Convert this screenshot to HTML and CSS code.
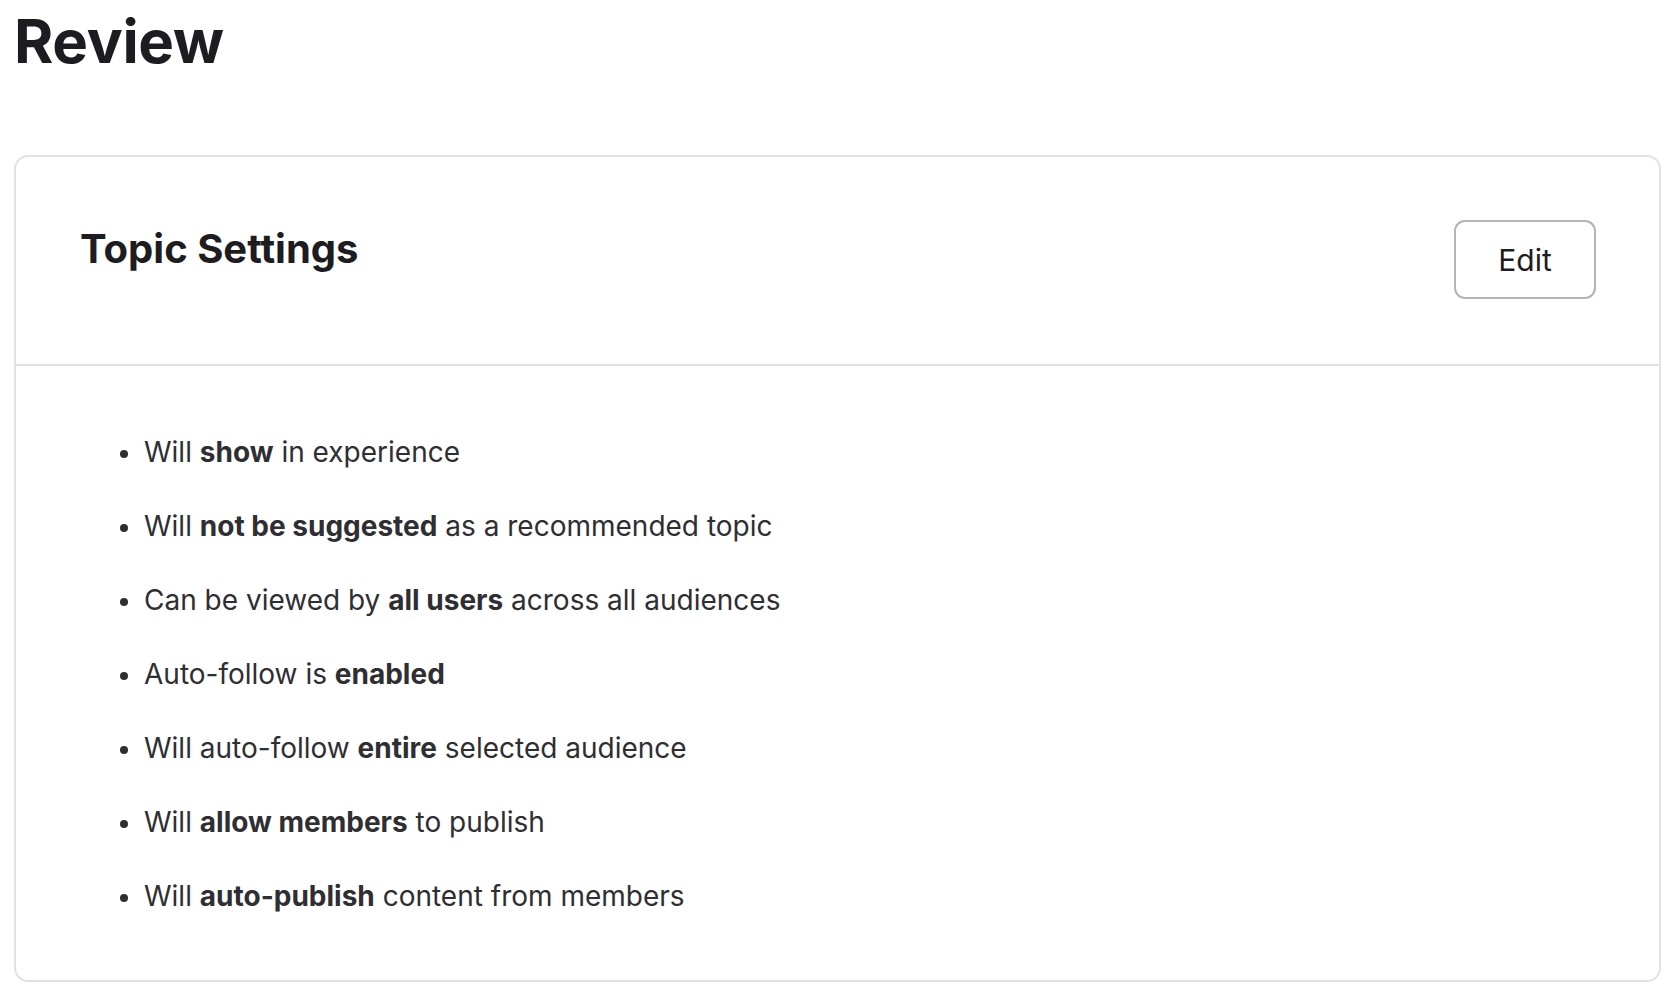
FILE: index.html
```html
<!DOCTYPE html>
<html lang="en">

<head>
    <meta charset="UTF-8">
    <meta name="viewport" content="width=device-width, initial-scale=1.0">
    <title>Review</title>
    <link rel="stylesheet" href="styles.css">
</head>

<body>
    <h1 class="page-title">Review</h1>

    <div class="card">
        <div class="card-header">
            <h2 class="card-title">Topic Settings</h2>
            <button class="edit-button">Edit</button>
        </div>
        <ul class="settings-list">
            <li>Will <strong>show</strong> in experience</li>
            <li>Will <strong>not be suggested</strong> as a recommended topic</li>
            <li>Can be viewed by <strong>all users</strong> across all audiences</li>
            <li>Auto-follow is <strong>enabled</strong></li>
            <li>Will auto-follow <strong>entire</strong> selected audience</li>
            <li>Will <strong>allow members</strong> to publish</li>
            <li>Will <strong>auto-publish</strong> content from members</li>
        </ul>
    </div>
</body>
</html>
```

FILE: styles.css
```css
body {
    font-family: 'Inter', 'Liberation Sans', sans-serif;
    background-color: #ffffff;
    color: #1c1c21;
    margin: 0;
    padding: 0 11px 0 14px;
}

.page-title {
    font-size: 60px;
    font-weight: 700;
    letter-spacing: -0.3px;
    line-height: 72px;
    margin: 5px 0 78px 0;
}

.card {
    border: 2px solid #e2e1e8;
    border-radius: 14px;
}

.card-header {
    display: flex;
    justify-content: space-between;
    align-items: flex-start;
    padding: 63px 63px 65px 64px;
    border-bottom: 2px solid #e2e1e8;
}

.card-title {
    font-size: 40px;
    font-weight: 700;
    line-height: 48px;
    margin: 5px 0 0 0;
}

.edit-button {
    font-family: inherit;
    font-size: 30px;
    color: #1c1c21;
    background-color: #ffffff;
    border: 2px solid #b4b3ba;
    border-radius: 11px;
    width: 142px;
    height: 79px;
    cursor: pointer;
}

.settings-list {
    list-style: none;
    margin: 0;
    padding: 66px 0 64px 104px;
    font-size: 28px;
    color: #2e2e33;
    display: flex;
    flex-direction: column;
    gap: 34px;
}

.settings-list li {
    line-height: 40px;
}

.settings-list li::before {
    content: "";
    display: inline-block;
    width: 8px;
    height: 8px;
    border-radius: 50%;
    background-color: #2e2e33;
    vertical-align: middle;
    margin-right: 16px;
}

.settings-list strong {
    font-weight: 700;
}
```
